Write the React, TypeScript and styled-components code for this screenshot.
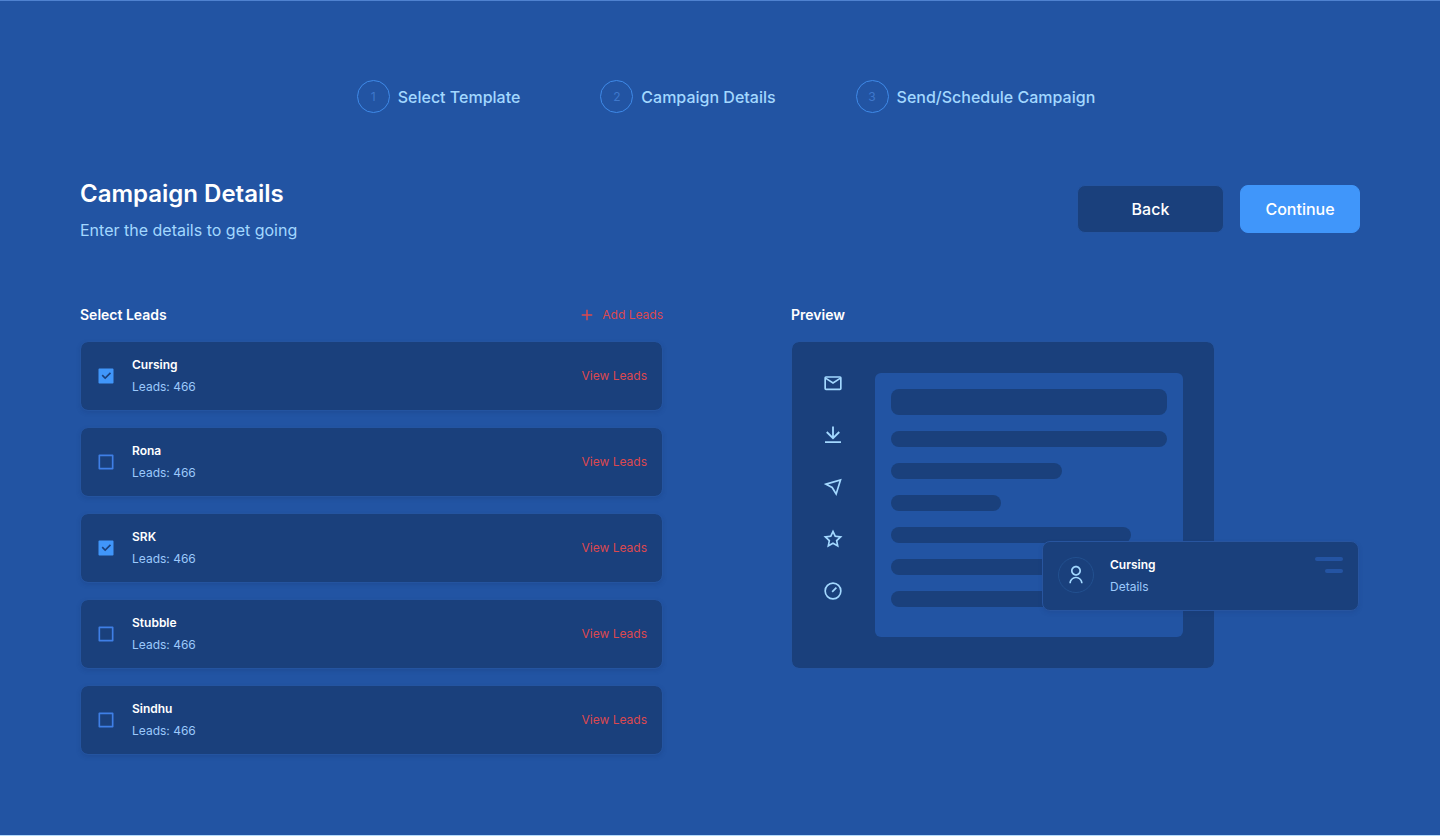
import React, { useState } from "react";
import styled, { createGlobalStyle } from "styled-components";
import {
  RiAddLine,
  RiCheckboxBlankLine,
  RiCheckboxFill,
  RiStarLine,
  RiUserLine,
} from "react-icons/ri";

const color = {
  page: "#2254a3",
  panel: "#1a407c",
  edge: "#2454a0",
  primary: "#4096fa",
  outline: "#3f7fe6",
  soft: "#a3d8ff",
  muted: "#9cc9fb",
  danger: "#dc484f",
};

const GlobalStyle = createGlobalStyle`
  *, *::before, *::after { box-sizing: border-box; }
  body {
    margin: 0;
    background: ${color.page};
    color: #fff;
    font-family: Inter, "Liberation Sans", sans-serif;
    font-size: 13px;
    line-height: 22px;
  }
  h1, h2, h3, p, ol, ul { margin: 0; padding: 0; }
  ol, ul { list-style: none; }
  button { font: inherit; cursor: pointer; }
`;

const Page = styled.div`
  min-height: 100vh;
  padding: 79px 80px 48px;
  border-top: 1px solid #4f82d0;
  border-bottom: 1px solid #b4dafa;
`;

const Steps = styled.ol`
  display: flex;
  flex-wrap: wrap;
  justify-content: center;
  gap: 16px 80px;
  padding-left: 12px;
`;

const Step = styled.li`
  display: flex;
  align-items: center;
  gap: 8px;
  color: ${color.soft};
  font-size: 16px;
  font-weight: 500;
`;

const StepNumber = styled.span`
  display: grid;
  place-items: center;
  width: 33px;
  height: 33px;
  border: 1px solid #3f8ae8;
  border-radius: 50%;
  color: #3f78cc;
  font-size: 12px;
  font-weight: 400;
`;

const Header = styled.header`
  display: flex;
  flex-wrap: wrap;
  justify-content: space-between;
  align-items: center;
  gap: 16px;
  margin-top: 63px;
`;

const HeaderText = styled.div`
  display: flex;
  flex-direction: column;
  gap: 6px;
`;

const Title = styled.h1`
  font-size: 24px;
  font-weight: 600;
  line-height: 36px;
`;

const Subtitle = styled.p`
  color: ${color.soft};
  font-size: 16px;
  line-height: 24px;
`;

const Actions = styled.div`
  display: flex;
  gap: 16px;
`;

const Button = styled.button<{ $primary?: boolean }>`
  min-width: ${(p) => (p.$primary ? 120 : 147)}px;
  height: 48px;
  padding: 0 16px;
  border: 1px solid ${(p) => (p.$primary ? color.primary : color.edge)};
  border-radius: 8px;
  background: ${(p) => (p.$primary ? color.primary : color.panel)};
  color: #fff;
  font-size: 16px;
  font-weight: 500;
`;

const Columns = styled.main`
  display: grid;
  grid-template-columns: 583fr 569fr;
  gap: 128px;
  margin-top: 63px;
`;

const SectionHead = styled.div`
  display: flex;
  justify-content: space-between;
  align-items: center;
  height: 20px;
  margin-bottom: 16px;
`;

const SectionTitle = styled.h2`
  font-size: 14px;
  font-weight: 600;
  line-height: 20px;
`;

const TextButton = styled.button`
  display: flex;
  align-items: center;
  gap: 6px;
  padding: 0;
  border: 0;
  background: none;
  color: ${color.danger};
  font-size: 12px;
  line-height: 20px;
`;

const LeadList = styled.ul`
  display: flex;
  flex-direction: column;
  gap: 16px;
`;

const LeadRow = styled.li`
  display: flex;
  justify-content: space-between;
  align-items: center;
  padding: 12px 15px;
  border: 1px solid ${color.edge};
  border-radius: 8px;
  background: ${color.panel};
  background-clip: padding-box;
  box-shadow: 0 2px 4px rgba(20, 50, 110, 0.2);
`;

const LeadLabel = styled.label`
  display: flex;
  align-items: center;
  gap: 16px;
  cursor: pointer;
`;

const CheckCell = styled.span<{ $checked: boolean }>`
  display: grid;
  place-items: center;
  width: 20px;
  height: 20px;
  color: ${(p) => (p.$checked ? color.primary : color.outline)};
  > * { grid-area: 1 / 1; }
`;

const CheckInput = styled.input`
  appearance: none;
  width: 16px;
  height: 16px;
  margin: 0;
  cursor: pointer;
`;

const Lines = styled.span`
  display: flex;
  flex-direction: column;
`;

const Name = styled.span`
  font-size: 12px;
  font-weight: 600;
`;

const Detail = styled.span`
  color: ${color.muted};
  font-size: 12px;
`;

const PreviewCard = styled.div`
  position: relative;
  display: flex;
  gap: 32px;
  width: 424px;
  max-width: 100%;
  padding: 31px;
  border: 1px solid ${color.edge};
  border-radius: 8px;
  background: ${color.panel};
  background-clip: padding-box;
`;

const IconRail = styled.div`
  display: flex;
  flex-direction: column;
  gap: 32px;
  color: ${color.soft};
`;

const Sheet = styled.div`
  display: flex;
  flex: 1;
  flex-direction: column;
  gap: 16px;
  padding: 16px 16px 30px;
  border-radius: 6px;
  background: ${color.page};
`;

const Bar = styled.div<{ $width: number; $tall?: boolean }>`
  width: ${(p) => p.$width}%;
  height: ${(p) => (p.$tall ? 26 : 16)}px;
  border-radius: 8px;
  background: ${color.panel};
`;

const Floating = styled.div`
  position: absolute;
  top: 199px;
  left: 250px;
  display: flex;
  align-items: center;
  gap: 16px;
  width: 317px;
  padding: 12px 15px;
  border: 1px solid #28559f;
  border-radius: 8px;
  background: ${color.panel};
  box-shadow: 0 2px 4px rgba(20, 50, 110, 0.15);
`;

const Avatar = styled.span`
  display: grid;
  place-items: center;
  width: 36px;
  height: 36px;
  margin-bottom: 2px;
  border: 1px solid #22508f;
  border-radius: 50%;
  color: ${color.soft};
`;

const Dashes = styled.span`
  display: flex;
  flex-direction: column;
  align-items: flex-end;
  align-self: flex-start;
  gap: 8px;
  margin-left: auto;
  padding-top: 3px;
`;

const Dash = styled.span<{ $width: number }>`
  width: ${(p) => p.$width}px;
  height: 4px;
  border-radius: 2px;
  background: #2454a3;
`;

const RailIcon = ({ children }: { children: React.ReactNode }) => (
  <svg width="20" height="20" viewBox="0 0 24 24" fill="none" stroke="currentColor" strokeWidth="2" aria-hidden="true">
    {children}
  </svg>
);

const MailIcon = () => (
  <RailIcon>
    <rect x="2.6" y="4.8" width="18.8" height="14.8" rx="1" />
    <path d="M3 6.2 12 12l9-5.8" />
  </RailIcon>
);

const DownloadIcon = () => (
  <RailIcon>
    <path d="M12 1.8v14M4.5 8.4 12 15.9l7.5-7.5M2.4 20.6h19.2" strokeWidth="2.2" />
  </RailIcon>
);

const SendIcon = () => (
  <RailIcon>
    <path d="M3.6 8.6 21 3.6 15.8 20.4 11 12.6Z" strokeLinejoin="miter" />
  </RailIcon>
);

const GaugeIcon = () => (
  <RailIcon>
    <circle cx="12" cy="12" r="9.4" />
    <path d="M11 13 16.1 7.9" />
  </RailIcon>
);

const steps = ["Select Template", "Campaign Details", "Send/Schedule Campaign"];

const leads = [
  { name: "Cursing", count: 466 },
  { name: "Rona", count: 466 },
  { name: "SRK", count: 466 },
  { name: "Stubble", count: 466 },
  { name: "Sindhu", count: 466 },
];

const bars = [100, 100, 62, 40, 87, 87, 87];

export default function App() {
  const [selected, setSelected] = useState<string[]>(["Cursing", "SRK"]);

  const toggle = (name: string) =>
    setSelected((list) => (list.includes(name) ? list.filter((n) => n !== name) : [...list, name]));

  return (
    <>
      <GlobalStyle />
      <Page>
        <Steps>
          {steps.map((label, i) => (
            <Step key={label}>
              <StepNumber>{i + 1}</StepNumber>
              {label}
            </Step>
          ))}
        </Steps>

        <Header>
          <HeaderText>
            <Title>Campaign Details</Title>
            <Subtitle>Enter the details to get going</Subtitle>
          </HeaderText>
          <Actions>
            <Button type="button">Back</Button>
            <Button type="button" $primary>Continue</Button>
          </Actions>
        </Header>

        <Columns>
          <section>
            <SectionHead>
              <SectionTitle>Select Leads</SectionTitle>
              <TextButton type="button">
                <RiAddLine size={18} />
                Add Leads
              </TextButton>
            </SectionHead>
            <LeadList>
              {leads.map(({ name, count }) => {
                const checked = selected.includes(name);
                return (
                  <LeadRow key={name}>
                    <LeadLabel>
                      <CheckCell $checked={checked}>
                        {checked ? <RiCheckboxFill size={20} /> : <RiCheckboxBlankLine size={20} />}
                        <CheckInput type="checkbox" checked={checked} onChange={() => toggle(name)} />
                      </CheckCell>
                      <Lines>
                        <Name>{name}</Name>
                        <Detail>Leads: {count}</Detail>
                      </Lines>
                    </LeadLabel>
                    <TextButton type="button">View Leads</TextButton>
                  </LeadRow>
                );
              })}
            </LeadList>
          </section>

          <section>
            <SectionHead>
              <SectionTitle>Preview</SectionTitle>
            </SectionHead>
            <PreviewCard>
              <IconRail>
                <MailIcon />
                <DownloadIcon />
                <SendIcon />
                <RiStarLine size={20} />
                <GaugeIcon />
              </IconRail>
              <Sheet>
                {bars.map((width, i) => (
                  <Bar key={i} $width={width} $tall={i === 0} />
                ))}
              </Sheet>
              <Floating>
                <Avatar>
                  <RiUserLine size={20} />
                </Avatar>
                <Lines>
                  <Name>Cursing</Name>
                  <Detail>Details</Detail>
                </Lines>
                <Dashes>
                  <Dash $width={28} />
                  <Dash $width={18} />
                </Dashes>
              </Floating>
            </PreviewCard>
          </section>
        </Columns>
      </Page>
    </>
  );
}
